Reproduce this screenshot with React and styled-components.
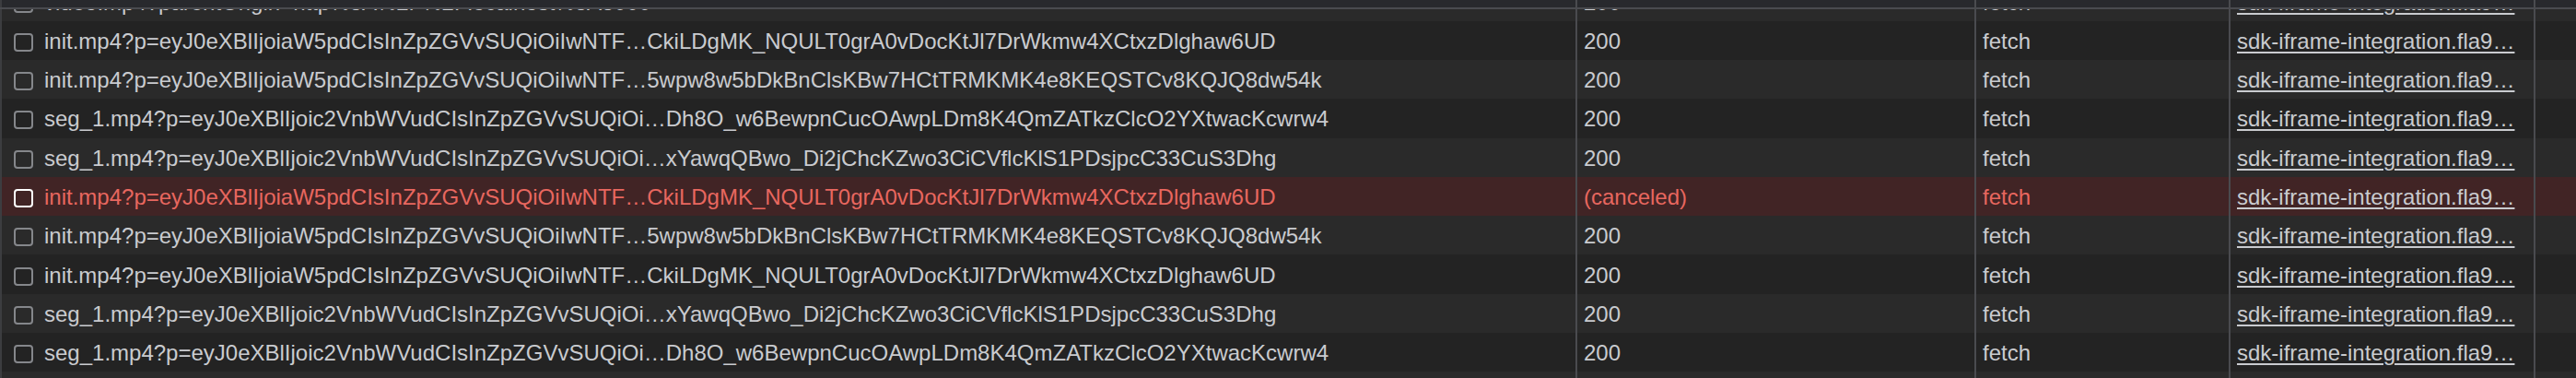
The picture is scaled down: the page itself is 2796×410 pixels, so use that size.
import styled, { createGlobalStyle } from "styled-components";

const INIT = "init.mp4?p=eyJ0eXBlIjoiaW5pdCIsInZpZGVvSUQiOiIwNTF";
const SEG = "seg_1.mp4?p=eyJ0eXBlIjoic2VnbWVudCIsInZpZGVvSUQiOi";
const INITIATOR = "sdk-iframe-integration.fla9…";

const rows = [
  { name: "video.mp4?parentOrigin=http%3A%2F%2Flocalhost%3A3000", status: "200", type: "fetch" },
  { name: `${INIT}…CkiLDgMK_NQULT0grA0vDocKtJl7DrWkmw4XCtxzDlghaw6UD`, status: "200", type: "fetch" },
  { name: `${INIT}…5wpw8w5bDkBnClsKBw7HCtTRMKMK4e8KEQSTCv8KQJQ8dw54k`, status: "200", type: "fetch" },
  { name: `${SEG}…Dh8O_w6BewpnCucOAwpLDm8K4QmZATkzClcO2YXtwacKcwrw4`, status: "200", type: "fetch" },
  { name: `${SEG}…xYawqQBwo_Di2jChcKZwo3CiCVflcKlS1PDsjpcC33CuS3Dhg`, status: "200", type: "fetch" },
  {
    name: `${INIT}…CkiLDgMK_NQULT0grA0vDocKtJl7DrWkmw4XCtxzDlghaw6UD`,
    status: "(canceled)",
    type: "fetch",
    failed: true,
  },
  { name: `${INIT}…5wpw8w5bDkBnClsKBw7HCtTRMKMK4e8KEQSTCv8KQJQ8dw54k`, status: "200", type: "fetch" },
  { name: `${INIT}…CkiLDgMK_NQULT0grA0vDocKtJl7DrWkmw4XCtxzDlghaw6UD`, status: "200", type: "fetch" },
  { name: `${SEG}…xYawqQBwo_Di2jChcKZwo3CiCVflcKlS1PDsjpcC33CuS3Dhg`, status: "200", type: "fetch" },
  { name: `${SEG}…Dh8O_w6BewpnCucOAwpLDm8K4QmZATkzClcO2YXtwacKcwrw4`, status: "200", type: "fetch" },
  { name: "", status: "", type: "", empty: true },
];

export default function App() {
  return (
    <>
      <GlobalStyle />
      <Panel>
        <HeaderStrip>
          <HeaderCell first />
          <HeaderCell />
          <HeaderCell />
          <HeaderCell />
          <HeaderCell last />
        </HeaderStrip>
        <Viewport>
          <RowList>
            {rows.map((row, i) => (
              <Row key={i} striped={i % 2 === 0} failed={row.failed}>
                <NameCell>
                  {!row.empty && <Checkbox focused={row.failed} />}
                  <CellText>{row.name}</CellText>
                </NameCell>
                <Cell>
                  <CellText>{row.status}</CellText>
                </Cell>
                <Cell>
                  <CellText>{row.type}</CellText>
                </Cell>
                <Cell>
                  {!row.empty && <InitiatorLink>{INITIATOR}</InitiatorLink>}
                </Cell>
                <Cell last />
              </Row>
            ))}
          </RowList>
        </Viewport>
      </Panel>
    </>
  );
}

const GlobalStyle = createGlobalStyle`
  html, body {
    margin: 0;
    padding: 0;
    background: #232323;
  }

  body {
    font-family: "Liberation Sans", Arial, Helvetica, sans-serif;
    font-size: 24px;
    color: #c9cbcf;
  }
`;

const COLUMNS = "1712px 433px 276px 331px 1fr";
const LINE = "#4a4b4f";

const Panel = styled.div`
  width: 2796px;
  height: 410px;

  display: flex;
  flex-direction: column;

  overflow: hidden;
  background: #232323;
`;

const HeaderStrip = styled.div`
  height: 8px;
  flex-shrink: 0;

  display: grid;
  grid-template-columns: ${COLUMNS};

  border-bottom: 2px solid ${LINE};
  background: #28292d;
`;

const HeaderCell = styled.div`
  box-sizing: border-box;
  border-left: ${(props) => (props.first ? "2px solid #3c3d40" : "none")};
  border-right: ${(props) => (props.last ? "none" : `2px solid ${LINE}`)};
`;

const Viewport = styled.div`
  flex: 1;
  overflow: hidden;
`;

/* scrolled: the first row sits mostly under the header */
const RowList = styled.div`
  margin-top: -29.6px;
`;

const Row = styled.div`
  height: 42.3px;

  display: grid;
  grid-template-columns: ${COLUMNS};

  background: ${(props) =>
    props.failed ? "#412425" : props.striped ? "#2a2a2a" : "#232323"};
  color: ${(props) => (props.failed ? "#e8675f" : "#c9cbcf")};
`;

const Cell = styled.div`
  box-sizing: border-box;
  min-width: 0;
  padding: 2px 0 0 7px;

  display: flex;
  align-items: center;

  border-right: ${(props) => (props.last ? "none" : `2px solid ${LINE}`)};

  white-space: nowrap;
  overflow: hidden;
`;

const NameCell = styled(Cell)`
  padding-left: 13px;
  gap: 12px;
  border-left: 2px solid #3c3d40;
`;

const Checkbox = styled.span`
  flex-shrink: 0;
  box-sizing: border-box;
  width: 21px;
  height: 20px;
  margin-top: 2px;

  border: 2px solid ${(props) => (props.focused ? "#ffffff" : "#85878b")};
  border-radius: 4px;
`;

const CellText = styled.span`
  line-height: 1;
`;

const InitiatorLink = styled.span`
  line-height: 1;
  text-decoration: underline;
  text-decoration-thickness: 2px;
  text-underline-offset: 3px;
  color: #c9cbcf;
`;
